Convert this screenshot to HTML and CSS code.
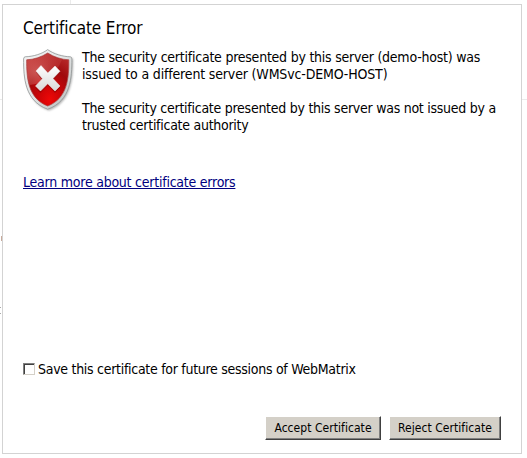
FILE: index.html
```html
<!DOCTYPE html>
<html lang="en">
<head>
<meta charset="utf-8">
<title>Certificate Error</title>
<link rel="stylesheet" href="styles.css">
</head>
<body>
<div class="backdrop" aria-hidden="true">
  <i class="tick tick-top"></i><i class="tick tick-left"></i><i class="tick tick-right"></i>
  <i class="sliver sliver-a"></i><i class="sliver sliver-b"></i><i class="sliver sliver-c"></i>
</div>
<main class="dialog">
  <h1 class="title">Certificate Error</h1>
  <div class="message">
    <svg class="shield" viewBox="0 0 54 64" width="54" height="64">
      <defs>
        <linearGradient id="rim" x1="0" y1="0" x2="1" y2="1">
          <stop offset="0" stop-color="#f5f5f5"/><stop offset=".5" stop-color="#e2e4e4"/><stop offset="1" stop-color="#b5b9b9"/>
        </linearGradient>
        <radialGradient id="red" cx=".55" cy=".88" r=".9">
          <stop offset="0" stop-color="#ee0808"/><stop offset=".3" stop-color="#cc0407"/><stop offset=".62" stop-color="#a00a0d"/><stop offset="1" stop-color="#b92d2d"/>
        </radialGradient>
        <radialGradient id="gloss" cx=".3" cy=".6" r=".7">
          <stop offset="0" stop-color="#ffb0a8" stop-opacity=".45"/><stop offset="1" stop-color="#ff9c94" stop-opacity=".12"/>
        </radialGradient>
        <linearGradient id="cross" x1="0" y1="0" x2="0" y2="1">
          <stop offset="0" stop-color="#fff"/><stop offset="1" stop-color="#d9d9d9"/>
        </linearGradient>
        <filter id="soft" x="-20%" y="-20%" width="140%" height="140%"><feGaussianBlur stdDeviation="1"/></filter>
      </defs>
      <path d="M26 2C20 6 11 9 3.500 9Q2 9 2 11C2 29 3 53 26 61.500C49 53 50 29 50 11Q50 9 48.500 9C41 9 32 6 26 2Z" fill="#777" opacity=".6" filter="url(#soft)"/>
      <path d="M24.700 .6C19 5 10 7.600 2.200 7.800Q.6 8 .6 10C.6 28 1.500 52 24.700 60.200C48 52 48.900 28 48.900 10Q48.900 8 47.300 7.800C39.500 7.600 30.500 5 24.700 .6Z" fill="url(#rim)" stroke="#929797" stroke-width=".8"/>
      <path d="M24.700 4C18.500 8 11 10.500 3.700 10.800C3.500 29 5 49.500 24.700 57C44.500 49.500 46 29 45.800 10.800C38.500 10.500 31 8 24.700 4Z" fill="url(#red)" stroke="#a94040" stroke-width=".7"/>
      <path d="M24.700 4.500C18.500 8.500 11 11 4.200 11.300C4 21 4.500 30 6.500 36C20 35 33 27 39 10.500C34 9.700 29 7.500 24.700 4.500Z" fill="url(#gloss)"/>
      <path d="M18.200 17L24.800 24.700L32.300 17L37.300 22.200L30 30L37.300 37.600L32 43L24.700 35.500L17.300 43L12.300 37.700L19.400 30.200L13 22.500Z" transform="translate(0 1)" fill="#700" opacity=".45"/>
      <path d="M18 16.500L24.800 24L32 17L37 22.200L30 29.500L37 37L32 42L24.700 34.800L17.500 42L12.500 37L19.500 29.700L13 22Z" fill="url(#cross)" stroke="#eee" stroke-width=".5" stroke-linejoin="round"/>
    </svg>
    <div class="reasons">
      <p><span class="l1">The security certificate presented by this server (demo-host) was</span><br><span class="l2">issued to a different server (WMSvc-DEMO-HOST)</span></p>
      <p><span class="l3">The security certificate presented by this server was not issued by a</span><br><span class="l4">trusted certificate authority</span></p>
    </div>
  </div>
  <a class="learn" href="#">Learn more about certificate errors</a>
  <label class="save"><input type="checkbox"><span>Save this certificate for future sessions of WebMatrix</span></label>
  <div class="actions">
    <button class="accept"><span>Accept Certificate</span></button>
    <button class="reject"><span>Reject Certificate</span></button>
  </div>
</main>
</body>
</html>
```
FILE: styles.css
```css
* { box-sizing: border-box; }
body {
  margin: 0;
  width: 527px;
  height: 458px;
  padding: 4px 0 0 2px;
  overflow: hidden;
  background: #fff;
  color: #000;
  font: 14px/17px "DejaVu Sans Condensed", "DejaVu Sans", sans-serif;
  font-stretch: condensed;
  white-space: nowrap;
}
.dialog {
  position: relative;
  display: flex;
  flex-direction: column;
  width: 520px;
  height: 450px;
  padding: 13px 20px 13px;
  border: 1px solid #d3d3d3;
  background: #fff;
}
.title { margin: 0; font-size: 17px; line-height: 20px; font-weight: 400; letter-spacing: -.12px; }
.message { display: flex; margin-top: 11px; height: 86px; }
.shield { flex: none; margin-right: 5px; }
.reasons p { margin: 0 0 17px; }
.l1 { letter-spacing: -.235px; }
.l2 { letter-spacing: -.16px; }
.l3 { letter-spacing: -.26px; }
.l4 { letter-spacing: -.27px; }
.learn { align-self: flex-start; margin-top: 39px; color: #000080; text-decoration: underline; letter-spacing: -.235px; }
.save { display: flex; align-items: center; margin-top: 169px; letter-spacing: -.285px; }
.save span { position: relative; top: 1px; }
.save input {
  appearance: none;
  width: 12px;
  height: 12px;
  margin: 0 3px 0 0;
  border: 1px solid;
  border-color: #808080 #d4d0c8 #d4d0c8 #808080;
  box-shadow: inset 1px 1px #404040;
  background: #fff;
}
.actions { display: flex; justify-content: flex-end; gap: 8px; margin-top: auto; }
.actions button {
  width: 116px;
  height: 24px;
  padding: 0;
  border: 1px solid;
  border-color: #fff #404040 #404040 #fff;
  box-shadow: inset -1px -1px #808080;
  background: #d4d0c8;
  color: #000;
  font: inherit;
  font-size: 12px;
  letter-spacing: .05px;
}
.actions .reject { width: 112px; }
.tick, .sliver { position: absolute; background: #ebebeb; }
.tick-top { left: 70px; top: 0; width: 1px; height: 4px; }
.tick-left { left: 0; top: 99px; width: 2px; height: 1px; }
.tick-right { left: 522px; top: 99px; width: 5px; height: 1px; }
.sliver-a { left: 1px; top: 236px; width: 1px; height: 5px; background: #c8aa9b; }
.sliver-b { left: 0; top: 307px; width: 1px; height: 1px; background: #aaa; }
.sliver-c { left: 0; top: 313px; width: 1px; height: 1px; background: #aaa; }
```
